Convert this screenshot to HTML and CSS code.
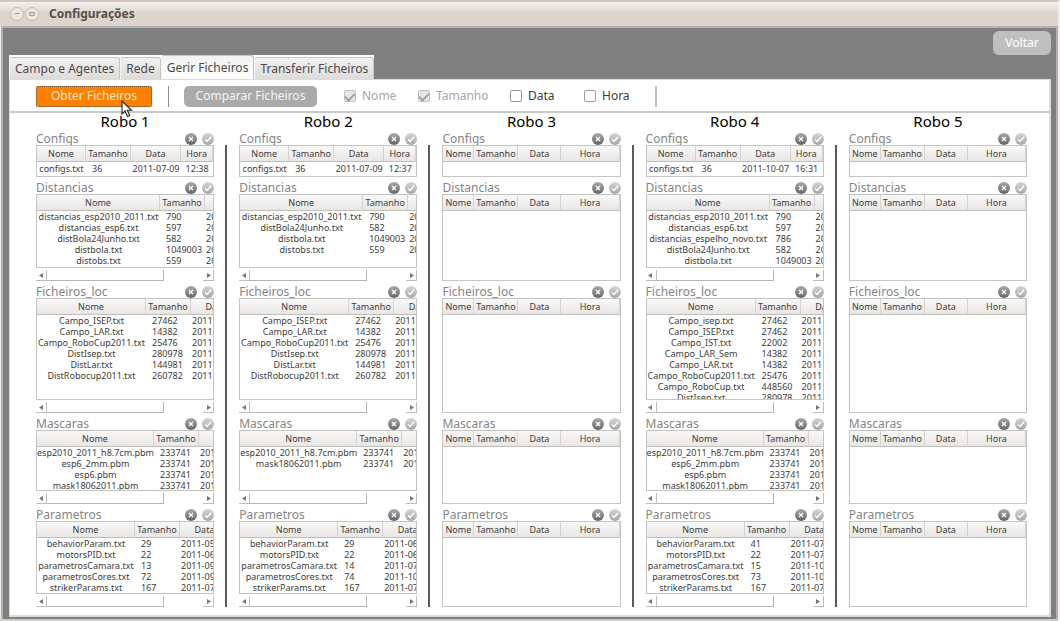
FILE: index.html
```
<!DOCTYPE html>
<html lang="pt">
<head>
<meta charset="utf-8">
<title>Configurações</title>
<link rel="stylesheet" href="styles.css">
</head>
<body>
<svg class="defs" aria-hidden="true">
  <defs>
    <linearGradient id="dark" x1="0" y1="0" x2="0" y2="1"><stop offset="0" stop-color="#a8a8a8"/><stop offset="1" stop-color="#666"/></linearGradient>
    <linearGradient id="light" x1="0" y1="0" x2="0" y2="1"><stop offset="0" stop-color="#d6d6d6"/><stop offset="1" stop-color="#a6a6a6"/></linearGradient>
  </defs>
  <symbol id="i-remove" viewBox="0 0 12 12"><circle cx="6" cy="6" r="6" fill="url(#dark)"/><path d="M4 4l4 4M8 4l-4 4" stroke="#fff" stroke-width="1.3"/></symbol>
  <symbol id="i-check" viewBox="0 0 12 12"><circle cx="6" cy="6" r="6" fill="url(#light)"/><path d="M3 6.4l2 2.1 4.2-4.700" fill="none" stroke="#fff" stroke-width="1.3"/></symbol>
</svg>
<div class="window">
  <header class="titlebar">
    <button class="winbtn" aria-label="Minimizar"><svg viewBox="0 0 14 14"><path d="M4 6.5h6" stroke="#8a827c"/></svg></button>
    <button class="winbtn" aria-label="Maximizar"><svg viewBox="0 0 14 14"><rect x="4.500" y="5" width="5" height="3.500" fill="none" stroke="#8a827c"/></svg></button>
    <h1>Configurações</h1>
  </header>
  <div class="client">
    <div class="actions"><button class="back">Voltar</button></div>
    <nav class="tabs">
      <button class="tab">Campo e Agentes</button><button class="tab">Rede</button><button class="tab active">Gerir Ficheiros</button><button class="tab">Transferir Ficheiros</button>
    </nav>
    <main class="pane">
      <div class="toolbar">
        <button class="get">Obter Ficheiros<svg class="cursor" viewBox="0 0 12 18"><path d="M1 1v13l3-3 2.500 5.500 2.300-1L6.300 10.300H10.500z" fill="#fff" stroke="#222" stroke-width="1.100"/></svg></button>
        <span class="rule"></span>
        <button class="compare">Comparar Ficheiros</button>
        <div class="checks">
          <label class="off"><input type="checkbox" checked disabled>Nome</label>
          <label class="off"><input type="checkbox" checked disabled>Tamanho</label>
          <label><input type="checkbox">Data</label>
          <label><input type="checkbox">Hora</label>
        </div>
        <span class="rule last"></span>
      </div>
      <div class="robots" id="robots"></div>
    </main>
  </div>
</div>
<script src="app.js"></script>
</body>
</html>
```
FILE: styles.css
```
* { box-sizing: border-box; }
body {
  margin: 0;
  background: #f1efed;
  color: #3c3c3c;
  font: 12px/16px "Noto Sans", "Open Sans", sans-serif;
}
button { margin: 0; padding: 0; border: 0; background: none; font: inherit; color: inherit; }
.defs { position: absolute; width: 0; height: 0; }
.window {
  display: flex;
  flex-direction: column;
  min-height: 100vh;
  margin-right: 2px;
  border-top: 2px solid #d3c5bd;
  border-bottom: 2px solid #cfccc8;
}
.titlebar {
  display: flex;
  align-items: center;
  gap: 1px;
  height: 24px;
  padding-left: 10px;
  background: linear-gradient(#f4f1ee, #ded5cf 45%, #ddd3cd);
}
.titlebar h1 { margin: 0 0 0 9px; font-size: 12px; line-height: 16px; color: #55504c; }
.winbtn { width: 14px; height: 14px; border: 1px solid #c4bab3; border-radius: 50%; background: #ece7e3; }
.winbtn svg { display: block; width: 12px; height: 12px; }
.client {
  display: flex;
  flex: 1;
  flex-direction: column;
  margin-left: 1px;
  padding: 3px 5px 2px 6px;
  border: 2px solid #b5b1ad;
  border-bottom-width: 0;
  background: #808080;
}
.actions { display: flex; justify-content: flex-end; height: 24px; }
.back { width: 58px; border-radius: 6px; background: #bfbfbf; color: #fff; }
.tabs { display: flex; align-items: flex-end; align-self: flex-start; height: 24px; background: #fff; }
.tab {
  height: 22px;
  padding: 0 5px;
  border: 1px solid #c6c3c0;
  border-bottom: 0;
  border-left-color: #f6f6f6;
  border-radius: 3px 3px 0 0;
  background: linear-gradient(#f2f1f0, #dedcda);
  color: #4a4a4a;
}
.tab.active { height: 24px; background: linear-gradient(#f3f2f1, #fff); }
.pane {
  flex: 1;
  padding: 1px 0 8px;
  border: 1px solid #dedcda;
  border-width: 1px 2px 2px 1px;
  background: #fff;
}
.toolbar { display: flex; align-items: center; height: 32px; padding: 0 0 0 26px; border-bottom: 2px solid #c9c9c9; }
.get { position: relative; width: 116px; height: 21px; border: 1px dotted #6a5030; border-radius: 2px; background: #ff8000; color: #ffe9d0; }
.cursor { position: absolute; left: 84px; top: 13px; width: 12px; height: 18px; }
.rule { width: 1px; height: 21px; margin: 0 15px 0 16px; background: #8f8f8f; }
.rule.last { width: 2px; margin: 0 0 0 25px; background: #bdbdbd; }
.compare { width: 133px; height: 21px; border-radius: 5px; background: #aaa; color: #f4f4f4; }
.checks { display: grid; grid-template-columns: 74px 92px 74px 46px; margin-left: 27px; }
.checks label { display: flex; align-items: center; gap: 6px; color: #3c3c3c; }
.checks .off { color: #a6a6a6; }
.checks input { appearance: none; display: grid; place-items: center; width: 12px; height: 12px; margin: 0; border: 1px solid #999; border-radius: 2px; background: #fff; }
.checks input:checked { border-color: #c2c2c2; background: #e6e6e6; }
.checks input:checked::after { content: ""; width: 8px; height: 4px; border: solid #a0a0a0; border-width: 0 0 2px 2px; transform: rotate(-45deg); }
.robots { display: flex; padding: 0 22px 0 26px; }
.robot { flex: 1; min-width: 0; }
.divider { flex: none; width: 2px; margin: 32px 12px 0 11px; background: #5a5a5a; }
.robot h2 { margin: 0; text-align: center; font-size: 15px; line-height: 17px; font-weight: 400; color: #000; }
.section-head { display: flex; align-items: flex-end; gap: 5px; height: 17px; }
.robot h2 + section .section-head { height: 15px; }
.section-head h3 { flex: 1; margin: 0; font-size: 12px; line-height: 13px; font-weight: 400; color: #858585; }
.section-head button { height: 13px; }
.section-head svg { display: block; width: 12px; height: 12px; }
.box { display: flex; flex-direction: column; gap: 2px; }
.configs { height: 32px; }
.distancias { height: 87px; }
.ficheiros { height: 115px; }
.mascaras { height: 74px; }
.parametros { height: 86px; }
.list { flex: 1; min-height: 0; overflow: hidden; border: 1px solid #c4c4c4; }
.list table { width: 100%; border-collapse: separate; border-spacing: 0; table-layout: fixed; font-size: 9px; line-height: 11px; white-space: nowrap; }
.list.scrolled table { width: 260px; }
.list th {
  height: 16px;
  padding: 0;
  border-right: 1px solid #d5d2cf;
  border-bottom: 1px solid #c2beb6;
  background: linear-gradient(#f8f8f7, #e9e7e5);
  font-weight: 400;
}
.list td { height: 11px; padding: 0; text-align: center; }
.list td:nth-child(2) { padding-left: 6px; text-align: left; }
.scrolled td:nth-child(3) { padding-left: 1px; text-align: left; }
.configs tbody td { height: 13px; }
.c1 { width: 49px; } .c2 { width: 45px; } .c3 { width: 50px; }
.empty .c1 { width: 31px; } .empty .c2 { width: 44px; } .empty .c3 { width: 43px; }
.scrolled .c2 { width: 45px; } .scrolled .c3 { width: 50px; }
.distancias .scrolled .c1 { width: 123px; }
.ficheiros .scrolled .c1 { width: 109px; }
.mascaras .scrolled .c1 { width: 117px; }
.parametros .scrolled .c1 { width: 98px; }
.scroll { display: flex; flex: none; height: 11px; }
.scroll button { display: grid; place-items: center; width: 11px; border: solid #bdbdbd; border-width: 0 1px 1px 0; }
.scroll svg { width: 5px; height: 5px; }
.track { flex: 1; }
.thumb { width: 75%; height: 100%; border: solid #b5b5b5; border-width: 0 1px 1px 0; }
```
FILE: app.js
```
const sections = [
  ["Configs", "configs"],
  ["Distancias", "distancias"],
  ["Ficheiros_loc", "ficheiros"],
  ["Mascaras", "mascaras"],
  ["Parametros", "parametros"]
];

const masks = [["esp2010_2011_h8.7cm.pbm", "233741", "2011"], ["esp6_2mm.pbm", "233741", "2011"], ["esp6.pbm", "233741", "2011"], ["mask18062011.pbm", "233741", "2011"]];

const fields = [
  ["Campo_ISEP.txt", "27462", "2011"], ["Campo_LAR.txt", "14382", "2011"], ["Campo_RoboCup2011.txt", "25476", "2011"],
  ["DistIsep.txt", "280978", "2011"], ["DistLar.txt", "144981", "2011"], ["DistRobocup2011.txt", "260782", "2011"]
];

const params = (sizes, dates) =>
  ["behaviorParam.txt", "motorsPID.txt", "parametrosCamara.txt", "parametrosCores.txt", "strikerParams.txt"]
    .map((name, i) => [name, sizes[i], "2011-" + dates[i]]);

const robots = [
  {
    configs: [["configs.txt", "36", "2011-07-09", "12:38"]],
    distancias: [["distancias_esp2010_2011.txt", "790", "2011"], ["distancias_esp6.txt", "597", "2011"], ["distBola24Junho.txt", "582", "2011"], ["distbola.txt", "1049003", "2011"], ["distobs.txt", "559", "2011"]],
    ficheiros: fields,
    mascaras: masks,
    parametros: params(["29", "22", "13", "72", "167"], ["05", "06", "09", "09", "07"])
  },
  {
    configs: [["configs.txt", "36", "2011-07-09", "12:37"]],
    distancias: [["distancias_esp2010_2011.txt", "790", "2011"], ["distBola24Junho.txt", "582", "2011"], ["distbola.txt", "1049003", "2011"], ["distobs.txt", "559", "2011"]],
    ficheiros: fields,
    mascaras: [masks[0], masks[3]],
    parametros: params(["29", "22", "14", "74", "167"], ["06", "06", "07", "10", "07"])
  },
  {},
  {
    configs: [["configs.txt", "36", "2011-10-07", "16:31"]],
    distancias: [["distancias_esp2010_2011.txt", "790", "2011"], ["distancias_esp6.txt", "597", "2011"], ["distancias_espelho_novo.txt", "786", "2011"], ["distBola24Junho.txt", "582", "2011"], ["distbola.txt", "1049003", "2011"]],
    ficheiros: [
      ["Campo_isep.txt", "27462", "2011"], ["Campo_ISEP.txt", "27462", "2011"], ["Campo_IST.txt", "22002", "2011"], ["Campo_LAR_Sem", "14382", "2011"],
      ["Campo_LAR.txt", "14382", "2011"], ["Campo_RoboCup2011.txt", "25476", "2011"], ["Campo_RoboCup.txt", "448560", "2011"], ["DistIsep.txt", "280978", "2011"]
    ],
    mascaras: masks,
    parametros: params(["41", "22", "15", "73", "167"], ["07", "07", "10", "10", "07"])
  },
  {}
];

const arrow = d => `<svg viewBox="0 0 5 5"><path d="${d}" fill="#777"/></svg>`;
const scrollbar = `<div class="scroll"><button aria-label="Esquerda">${arrow("M4 0v5L0 2.5z")}</button>
  <div class="track"><div class="thumb"></div></div><button aria-label="Direita">${arrow("M1 0v5l4-2.5z")}</button></div>`;

function section([label, key], rows) {
  const scrolled = rows && key !== "configs";
  const state = rows ? (scrolled ? "scrolled" : "") : "empty";
  // Columns past the visible area of a scrolled list carry no heading.
  const heads = !scrolled ? ["Nome", "Tamanho", "Data", "Hora"]
    : ["Nome", "Tamanho", key === "ficheiros" || key === "parametros" ? "Data" : ""];
  const body = (rows || []).map(r => `<tr>${r.map(c => `<td>${c}</td>`).join("")}</tr>`).join("");
  return `<section>
    <div class="section-head"><h3>${label}</h3>
      <button aria-label="Remover"><svg><use href="#i-remove"/></svg></button>
      <button aria-label="Confirmar"><svg><use href="#i-check"/></svg></button></div>
    <div class="box ${key}"><div class="list ${state}"><table>
      <colgroup><col class="c1"><col class="c2"><col class="c3"><col></colgroup>
      <thead><tr>${heads.map(h => `<th>${h}</th>`).join("")}</tr></thead><tbody>${body}</tbody>
    </table></div>${scrolled ? scrollbar : ""}</div></section>`;
}

document.getElementById("robots").innerHTML = robots
  .map((r, i) => `<div class="robot"><h2>Robo ${i + 1}</h2>${sections.map(s => section(s, r[s[1]])).join("")}</div>`)
  .join('<span class="divider"></span>');
```
